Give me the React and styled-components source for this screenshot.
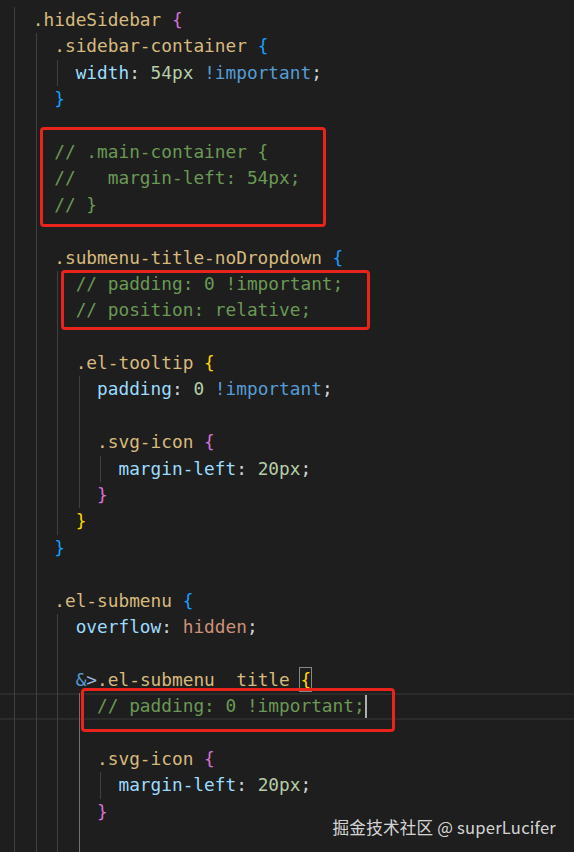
import React from "react";
import styled, { createGlobalStyle, css } from "styled-components";

const GlobalStyle = createGlobalStyle`
  html, body {
    margin: 0;
    padding: 0;
    background: #1e1e1e;
    overflow: hidden;
  }
`;

const colors = {
  sel: "#d7ba7d",
  prop: "#9cdcfe",
  punc: "#d4d4d4",
  num: "#b5cea8",
  kw: "#569cd6",
  com: "#6a9955",
  str: "#ce9178",
  amp: "#569cd6",
  op: "#9cb8dc",
  b2: "#da70d6",
  b3: "#179fff",
  b4: "#ffd700",
  b5: "#da70d6",
};

const Editor = styled.div`
  position: relative;
  width: 574px;
  height: 852px;
  padding-top: 7px;
  box-sizing: border-box;
  background: #1e1e1e;
  font-family: "DejaVu Sans Mono", "Liberation Mono", monospace;
  font-size: 17.8px;
  overflow: hidden;
`;

const Lines = styled.div`
  margin-left: -10px;
`;

const Line = styled.div`
  display: flex;
  height: 26.4px;
  line-height: 26.4px;
  white-space: pre;
  ${(p) =>
    p.$current &&
    css`
      box-shadow: inset 0 2px #2b2b2b, inset 0 -2px #2b2b2b;
    `}
`;

const Indent = styled.span`
  display: inline-block;
  flex: none;
  width: 2ch;
  background: linear-gradient(
    90deg,
    transparent 3px,
    ${(p) => (p.$active ? "#707070" : "#404040")} 3px,
    ${(p) => (p.$active ? "#707070" : "#404040")} 4px,
    transparent 4px
  );
`;

const Code = styled.span`
  display: inline-flex;
  align-items: center;
`;

const Tok = styled.span`
  color: ${(p) => colors[p.$t] || "#d4d4d4"};
  ${(p) =>
    p.$match &&
    css`
      outline: 1px solid #888;
      outline-offset: 0;
      line-height: 23px;
    `}
`;

const Cursor = styled.span`
  display: inline-block;
  width: 2px;
  height: 23px;
  background: #aeafad;
`;

const Mark = styled.div`
  position: absolute;
  left: ${(p) => p.$x}px;
  top: ${(p) => p.$y}px;
  width: ${(p) => p.$w}px;
  height: ${(p) => p.$h}px;
  border: 3px solid #e8241d;
  border-radius: 4px;
  box-sizing: border-box;
  pointer-events: none;
`;

const Watermark = styled.div`
  position: absolute;
  right: 18px;
  bottom: 13px;
  font-family: "Noto Sans CJK SC", "Noto Sans", sans-serif;
  font-size: 16.6px;
  color: rgba(236, 236, 236, 0.9);
  letter-spacing: 0.2px;
`;

// [guides, tokens, options]
const code = [
  [2, [["sel", ".hideSidebar"], ["", " "], ["b2", "{"]]],
  [3, [["sel", ".sidebar-container"], ["", " "], ["b3", "{"]]],
  [4, [["prop", "width"], ["punc", ": "], ["num", "54px"], ["", " "], ["kw", "!important"], ["punc", ";"]]],
  [3, [["b3", "}"]]],
  [3, []],
  [3, [["com", "// .main-container {"]]],
  [3, [["com", "//   margin-left: 54px;"]]],
  [3, [["com", "// }"]]],
  [3, []],
  [3, [["sel", ".submenu-title-noDropdown"], ["", " "], ["b3", "{"]]],
  [4, [["com", "// padding: 0 !important;"]]],
  [4, [["com", "// position: relative;"]]],
  [4, []],
  [4, [["sel", ".el-tooltip"], ["", " "], ["b4", "{"]]],
  [5, [["prop", "padding"], ["punc", ": "], ["num", "0"], ["", " "], ["kw", "!important"], ["punc", ";"]]],
  [5, []],
  [5, [["sel", ".svg-icon"], ["", " "], ["b5", "{"]]],
  [6, [["prop", "margin-left"], ["punc", ": "], ["num", "20px"], ["punc", ";"]]],
  [5, [["b5", "}"]]],
  [4, [["b4", "}"]]],
  [3, [["b3", "}"]]],
  [3, []],
  [3, [["sel", ".el-submenu"], ["", " "], ["b3", "{"]]],
  [4, [["prop", "overflow"], ["punc", ": "], ["str", "hidden"], ["punc", ";"]]],
  [4, []],
  [4, [["amp", "&"], ["op", ">"], ["sel", ".el-submenu  title"], ["", " "], ["b4", "{", true]]],
  [5, [["com", "// padding: 0 !important;"]], { current: true, cursor: true }],
  [5, []],
  [5, [["sel", ".svg-icon"], ["", " "], ["b5", "{"]]],
  [6, [["prop", "margin-left"], ["punc", ": "], ["num", "20px"], ["punc", ";"]]],
  [5, [["b5", "}"]]],
  [5, []],
  [4, [["b4", "}", true]]],
];

// lines whose col-8 guide is the active one
const activeFrom = 26;
const activeTo = 32;

const App = () => {
  return (
    <>
      <GlobalStyle />
      <Editor>
        <Lines>
          {code.map(([guides, tokens, opts = {}], i) => (
            <Line key={i} $current={opts.current}>
              {Array.from({ length: guides }).map((_, g) => (
                <Indent
                  key={g}
                  $active={g === 4 && i >= activeFrom && i <= activeTo}
                />
              ))}
              <Code>
                {tokens.map(([t, text, match], k) => (
                  <Tok key={k} $t={t} $match={match}>
                    {text}
                  </Tok>
                ))}
                {opts.cursor && <Cursor />}
              </Code>
            </Line>
          ))}
        </Lines>
        <Mark $x={40} $y={127} $w={286} $h={100} />
        <Mark $x={61} $y={270} $w={309} $h={60} />
        <Mark $x={81} $y={688} $w={314} $h={44} />
        <Watermark>掘金技术社区 @ superLucifer</Watermark>
      </Editor>
    </>
  );
};

export default App;
